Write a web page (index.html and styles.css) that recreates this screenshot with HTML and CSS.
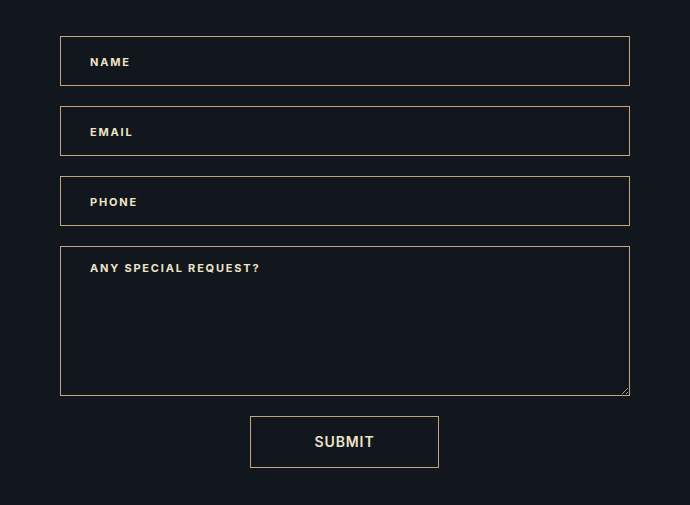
FILE: index.html
```html
<!DOCTYPE html>
<html lang="en">
<head>
  <meta charset="UTF-8" />
  <meta name="viewport" content="width=device-width, initial-scale=1" />
  <title>Reservation</title>
  <link rel="stylesheet" href="styles.css">
</head>
<body>
  <form class="booking-form">
    <input class="field" type="text" placeholder="Name" />
    <input class="field" type="email" placeholder="Email" />
    <input class="field" type="tel" placeholder="Phone" />
    <textarea class="field field-message" placeholder="Any special request?"></textarea>
    <button class="submit-btn" type="button">Submit</button>
  </form>
</body>
</html>
```

FILE: styles.css
```css
html, body {
  margin: 0;
  background-color: #11171c;
}

body {
  font-family: Inter, 'Noto Sans', sans-serif;
  padding: 36px 60px 0;
}

.booking-form {
  display: flex;
  flex-direction: column;
  align-items: center;
  gap: 20px;
}

.field {
  box-sizing: border-box;
  width: 100%;
  height: 50px;
  margin: 0;
  padding: 2px 29px 0;
  background: transparent;
  border: 1px solid #c5a47e;
  border-radius: 0;
  color: #efe3c8;
  font-family: inherit;
  font-size: 11px;
  font-weight: 700;
  letter-spacing: 1.8px;
  text-transform: uppercase;
  outline: none;
}

.field::placeholder {
  color: #efe3c8;
  opacity: 1;
}

.field-message {
  height: 150px;
  padding-top: 14px;
  resize: vertical;
  display: block;
}

.submit-btn {
  box-sizing: border-box;
  width: 189px;
  height: 52px;
  margin-right: 1px;
  padding: 0 0 2px;
  background: transparent;
  border: 1px solid #c5a47e;
  color: #efe3c8;
  font-family: inherit;
  font-size: 14px;
  font-weight: 600;
  letter-spacing: 0.9px;
  text-transform: uppercase;
  cursor: pointer;
}
```
